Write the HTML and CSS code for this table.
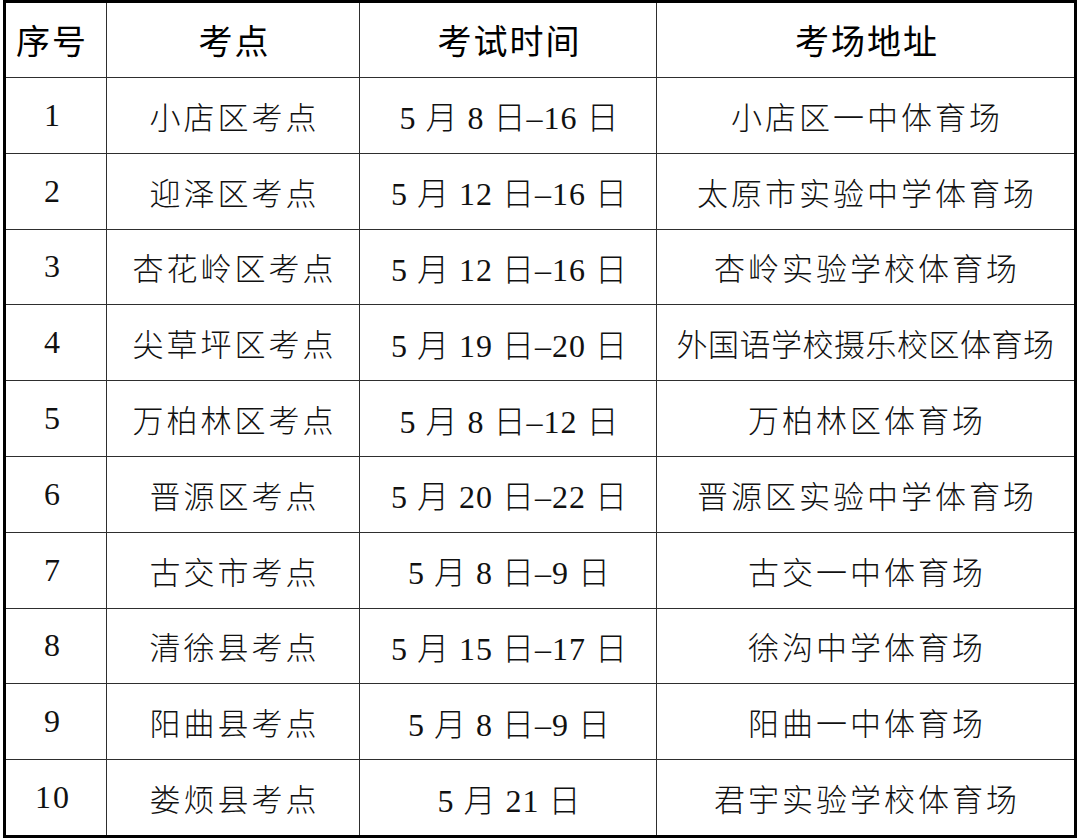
FILE: index.html
```html
<!DOCTYPE html>
<html lang="zh-CN">
<head>
<meta charset="utf-8">
<link rel="stylesheet" href="styles.css">
</head>
<body>
<div class="sheet">
  <div class="grid">
    <div class="cell head first">序号</div>
    <div class="cell head">考点</div>
    <div class="cell head">考试时间</div>
    <div class="cell head">考场地址</div>

    <div class="cell num">1</div>
    <div class="cell">小店区考点</div>
    <div class="cell date">5 月 8 日–16 日</div>
    <div class="cell">小店区一中体育场</div>

    <div class="cell num">2</div>
    <div class="cell">迎泽区考点</div>
    <div class="cell date">5 月 12 日–16 日</div>
    <div class="cell">太原市实验中学体育场</div>

    <div class="cell num">3</div>
    <div class="cell">杏花岭区考点</div>
    <div class="cell date">5 月 12 日–16 日</div>
    <div class="cell">杏岭实验学校体育场</div>

    <div class="cell num">4</div>
    <div class="cell">尖草坪区考点</div>
    <div class="cell date">5 月 19 日–20 日</div>
    <div class="cell tight">外国语学校摄乐校区体育场</div>

    <div class="cell num">5</div>
    <div class="cell">万柏林区考点</div>
    <div class="cell date">5 月 8 日–12 日</div>
    <div class="cell">万柏林区体育场</div>

    <div class="cell num">6</div>
    <div class="cell">晋源区考点</div>
    <div class="cell date">5 月 20 日–22 日</div>
    <div class="cell">晋源区实验中学体育场</div>

    <div class="cell num">7</div>
    <div class="cell">古交市考点</div>
    <div class="cell date">5 月 8 日–9 日</div>
    <div class="cell">古交一中体育场</div>

    <div class="cell num">8</div>
    <div class="cell">清徐县考点</div>
    <div class="cell date">5 月 15 日–17 日</div>
    <div class="cell">徐沟中学体育场</div>

    <div class="cell num">9</div>
    <div class="cell">阳曲县考点</div>
    <div class="cell date">5 月 8 日–9 日</div>
    <div class="cell">阳曲一中体育场</div>

    <div class="cell num">10</div>
    <div class="cell">娄烦县考点</div>
    <div class="cell date">5 月 21 日</div>
    <div class="cell">君宇实验学校体育场</div>
  </div>
</div>
</body>
</html>
```

FILE: styles.css
```css
html, body {
  margin: 0;
  padding: 0;
  background: #ffffff;
}

.sheet {
  margin-left: 3px;
  width: 1074px;
  height: 838px;
  box-sizing: border-box;
  border: 3px solid #000000;
  background: #2e2e2e;
}

.grid {
  display: grid;
  grid-template-columns: 100px 252px 296px 417px;
  grid-template-rows: 74px repeat(10, 1fr);
  gap: 1px;
  height: 100%;
}

.cell {
  background: #ffffff;
  display: flex;
  align-items: center;
  justify-content: center;
  color: #111111;
  font-family: "Liberation Serif", "Noto Sans CJK SC", serif;
  font-size: 31px;
  font-weight: 300;
  letter-spacing: 3px;
  white-space: nowrap;
  padding-left: 3px;
}

.head {
  font-size: 34px;
  font-weight: 400;
  letter-spacing: 2px;
  padding-bottom: 2px;
  color: #000000;
}

.first {
  padding-left: 0;
  padding-right: 8px;
}

.num {
  font-size: 32px;
  letter-spacing: 2px;
  padding-left: 0;
  padding-right: 6px;
}

.date {
  font-size: 32px;
  letter-spacing: 1px;
}

.tight {
  letter-spacing: 0.5px;
  padding-left: 0;
}
```
